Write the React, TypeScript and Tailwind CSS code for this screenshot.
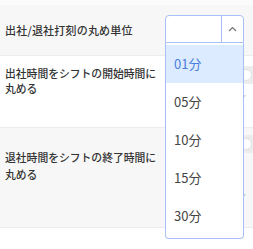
import React from "react"

const options = ["01分", "05分", "10分", "15分", "30分"]

function Toggle() {
  return (
    <div className="flex h-[18px] w-[30px] items-center rounded-full bg-[#ececec] px-[2px]">
      <div className="size-[12px] rounded-full border border-[#e2e2e2] bg-white" />
    </div>
  )
}

function RoundingSelect() {
  const selected = "01分"
  return (
    <div className="absolute left-[165px] top-[15px] w-[79px]">
      <div className="flex h-[28px] rounded-t-[4px] border border-[#a9bff7] bg-white">
        <div className="flex-1" />
        <div className="flex w-[22px] items-center justify-center border-l border-[#a9bff7]">
          <svg width="9" height="6" viewBox="0 0 9 6" fill="none">
            <path d="M1 5L4.5 1.5L8 5" stroke="#777" strokeWidth="1.2" />
          </svg>
        </div>
      </div>
      <div className="rounded-b-[4px] border border-t-0 border-[#a9bff7] bg-white pb-[3px] pt-[2px]">
        {options.map((o) => (
          <div
            key={o}
            className={
              o === selected
                ? "flex h-[38px] items-center bg-[#dcebff] pl-[8px] text-[13px] text-[#4a7fdc]"
                : "flex h-[38px] items-center pl-[8px] text-[13px] text-[#444]"
            }
          >
            {o}
          </div>
        ))}
      </div>
    </div>
  )
}

export default function App() {
  return (
    <div className="relative h-[249px] w-[253px] overflow-hidden bg-white font-['Noto_Sans_CJK_JP',sans-serif] text-[#333]">
      <div className="h-[5px] bg-[#fbfbfb]" />
      <div className="flex h-[51px] items-center border-b border-[#ececec] bg-[#f7f7f7] px-[5px]">
        <span className="text-[11px] font-medium tracking-[0.2px]">出社/退社打刻の丸め単位</span>
      </div>
      <div className="flex h-[72px] border-b border-[#ececec] bg-white">
        <div className="w-[238px] pl-[5px] pt-[10px]">
          <p className="w-[153px] text-[10.8px] font-medium leading-[15px]">出社時間をシフトの開始時間に丸める</p>
        </div>
        <div className="flex flex-1 flex-col overflow-hidden pt-[10px]">
          <Toggle />
          <span className="mt-[6px] text-[8px] text-[#aaa]">シ</span>
        </div>
      </div>
      <div className="flex h-[100px] border-b border-[#ececec] bg-[#f7f7f7]">
        <div className="w-[238px] pl-[5px] pt-[21px]">
          <p className="w-[153px] text-[10.8px] font-medium leading-[17px]">退社時間をシフトの終了時間に丸める</p>
        </div>
        <div className="flex flex-1 flex-col overflow-hidden pt-[7px]">
          <Toggle />
          <span className="mt-[36px] text-[8px] text-[#aaa]">シ</span>
        </div>
      </div>
      <RoundingSelect />
    </div>
  )
}
